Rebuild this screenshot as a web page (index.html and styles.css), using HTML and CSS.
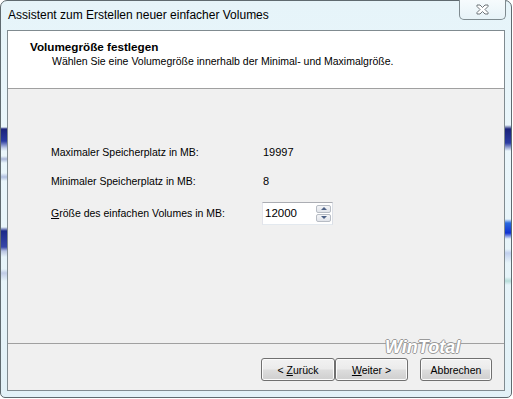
FILE: index.html
```html
<!DOCTYPE html>
<html>

<head>
  <meta charset='utf-8'>
  <title>Assistent zum Erstellen neuer einfacher Volumes</title>
  <link rel="stylesheet" href="styles.css">
</head>

<body>
  <div class='window'>
    <div class='titlebar'>
      <span class='title'>Assistent zum Erstellen neuer einfacher Volumes</span>
      <button class='close' title='Schließen'>
        <svg width='15' height='11' viewBox='0 0 15 11'>
          <path d='M2 1h3l2.5 2.5L10 1h3v1.5L10 5.5l3 3V10h-3L7.5 7.5 5 10H2V8.5l3-3-3-3z' fill='#fff' stroke='#6d7479' stroke-width='1'/>
        </svg>
      </button>
    </div>
    <div class='client'>
      <div class='header'>
        <div class='header-title'>Volumegröße festlegen</div>
        <div class='header-sub'>Wählen Sie eine Volumegröße innerhalb der Minimal- und Maximalgröße.</div>
      </div>
      <div class='content'>
        <div class='row'>
          <span class='label'>Maximaler Speicherplatz in MB:</span>
          <span class='value'>19997</span>
        </div>
        <div class='row'>
          <span class='label'>Minimaler Speicherplatz in MB:</span>
          <span class='value'>8</span>
        </div>
        <div class='row row-input'>
          <label class='label' for='size'><u>G</u>röße des einfachen Volumes in MB:</label>
          <div class='spin'>
            <input type='text' id='size' value='12000'>
            <div class='spin-buttons'>
              <span class='spin-btn'><i class='arrow-up'></i></span>
              <span class='spin-btn'><i class='arrow-down'></i></span>
            </div>
          </div>
        </div>
      </div>
      <div class='footer'>
        <span class='watermark'>WinTotal</span>
        <button class='btn btn-back'>&lt; <u>Z</u>urück</button>
        <button class='btn btn-next'><u>W</u>eiter &gt;</button>
        <button class='btn btn-cancel'>Abbrechen</button>
      </div>
    </div>
  </div>
</body>

</html>
```

FILE: styles.css
```css
html, body {
  margin: 0;
  background-color: #fff;
}

body {
  font-family: 'Liberation Sans', Arial, sans-serif;
  font-size: 10.5px;
  color: #000;
}

.window {
  box-sizing: border-box;
  width: 512px;
  height: 398px;
  display: flex;
  flex-direction: column;
  padding: 0 6px 6px 6px;
  border: 1px solid #5f6a6f;
  border-radius: 7px 7px 5px 5px;
  background:
    linear-gradient(transparent 126px, #1b237a 128px, #2a3aa0 140px, #c4d0ea 147px, transparent 150px,
      transparent 155px, #a9b6d8 158px, transparent 162px, transparent 172px, #b0bfe0 176px, transparent 180px,
      transparent 226px, #1c2a88 230px, #3746a8 246px, #b8c3e0 250px, transparent 256px,
      transparent 268px, #c0cbe6 272px, transparent 280px) left top / 6px 100% no-repeat,
    linear-gradient(transparent 124px, #1b237a 128px, #2c3ca2 142px, transparent 150px,
      transparent 218px, #2a6adf 222px, #1030d0 232px, transparent 238px,
      transparent 248px, #c0cfee 252px, transparent 262px, transparent 276px, #b5dcd8 280px, transparent 284px) right top / 6px 100% no-repeat,
    linear-gradient(#e6f4f9, #eaf6fb 40%, #e2f1f7);
}

.titlebar {
  height: 29px;
  display: flex;
  align-items: flex-start;
}

.title {
  padding: 7px 0 0 1px;
  font-size: 12px;
  color: #000;
}

.close {
  margin: -1px -1px 0 auto;
  width: 47px;
  height: 20px;
  padding: 0;
  display: flex;
  align-items: center;
  justify-content: center;
  border: 1px solid #7f8b90;
  border-top: none;
  border-radius: 0 0 5px 5px;
  background: linear-gradient(#f6fbfd, #e7f3f8);
}

.client {
  flex: 1;
  display: flex;
  flex-direction: column;
  border: 1px solid #808b90;
  background-color: #f0f0f0;
}

.header {
  height: 58px;
  border-bottom: 1px solid #a0a0a0;
  background-color: #fff;
  padding: 9px 0 0 22px;
  box-sizing: border-box;
}

.header-title {
  font-size: 11.7px;
  font-weight: bold;
  line-height: 14px;
}

.header-sub {
  padding-left: 22px;
  line-height: 15px;
}

.content {
  flex: 1;
  padding: 48px 0 0 43px;
  border-bottom: 1px solid #a0a0a0;
}

.row {
  display: flex;
  align-items: center;
  height: 29px;
}

.row-input {
  height: 32px;
  margin-top: 2px;
}

.label {
  width: 211px;
}

.value {
  padding-left: 1px;
  font-size: 11px;
}

.spin {
  display: flex;
  align-items: center;
  width: 71px;
  height: 23px;
  box-sizing: border-box;
  border: 1px solid #abadb3;
  border-color: #abadb3 #dbdfe6 #e3e9ef #e2e3ea;
  background-color: #fff;
}

.spin input {
  width: 50px;
  border: none;
  outline: none;
  padding: 0 0 0 2px;
  font-family: inherit;
  font-size: 11.5px;
  background: transparent;
}

.spin-buttons {
  display: flex;
  flex-direction: column;
  gap: 1px;
  margin-left: auto;
  margin-right: 1px;
}

.spin-btn {
  width: 15px;
  height: 8px;
  box-sizing: border-box;
  border: 1px solid #b7bcc4;
  border-radius: 2px;
  background: linear-gradient(#f4f5f7, #e1e4ea);
  display: flex;
  align-items: center;
  justify-content: center;
}

.arrow-up {
  border-left: 3px solid transparent;
  border-right: 3px solid transparent;
  border-bottom: 3px solid #4d6185;
}

.arrow-down {
  border-left: 3px solid transparent;
  border-right: 3px solid transparent;
  border-top: 3px solid #4d6185;
}

.footer {
  position: relative;
  height: 46px;
  display: flex;
  align-items: flex-start;
  padding: 14px 12px 0 0;
  box-sizing: border-box;
}

.btn {
  height: 23px;
  padding: 0;
  font-family: inherit;
  font-size: 10.5px;
  color: #000;
  border: 1px solid #707070;
  border-radius: 3px;
  background: linear-gradient(#f2f2f2 0%, #ebebeb 48%, #dddddd 52%, #cfcfcf 100%);
  box-shadow: inset 0 0 0 1px #fbfbfb;
}

.btn-back {
  width: 74px;
  margin-left: auto;
}

.btn-next {
  width: 73px;
}

.btn-cancel {
  width: 72px;
  margin-left: 12px;
}

.watermark {
  position: absolute;
  left: 377px;
  top: -7px;
  font-family: 'Liberation Sans', Arial, sans-serif;
  font-size: 18px;
  font-weight: bold;
  font-style: italic;
  letter-spacing: 0;
  color: #fff;
  text-shadow: 1px 0 0 #9a9a9a, -1px 0 0 #9a9a9a, 0 1px 0 #9a9a9a, 0 -1px 0 #9a9a9a;
}
```
